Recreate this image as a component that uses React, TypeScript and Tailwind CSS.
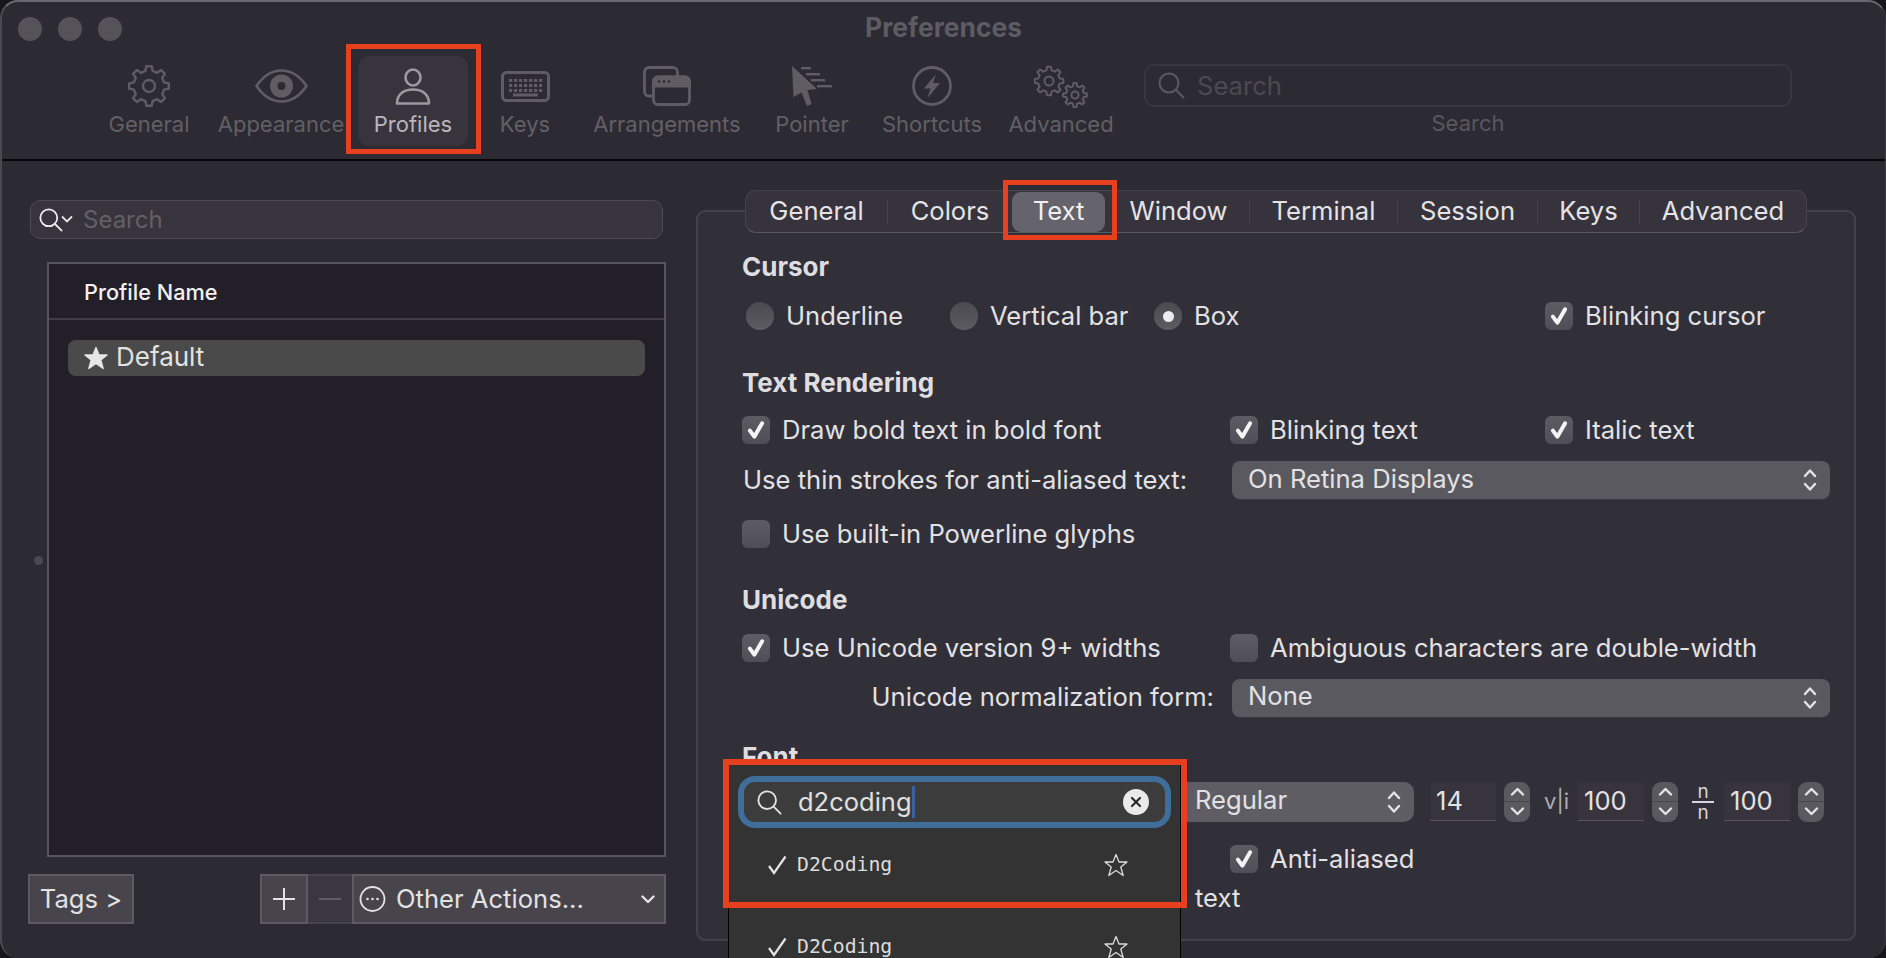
import React from "react";

const gear = (cx: number, cy: number, ro: number, ri: number, n: number) => {
  const pts: string[] = [];
  const step = (Math.PI * 2) / n;
  for (let i = 0; i < n; i++) {
    const a = i * step - Math.PI / 2;
    const p = (r: number, t: number) => `${(cx + r * Math.cos(t)).toFixed(2)} ${(cy + r * Math.sin(t)).toFixed(2)}`;
    pts.push(p(ri, a - step * 0.3), p(ro, a - step * 0.17), p(ro, a + step * 0.17), p(ri, a + step * 0.3));
  }
  return "M" + pts.join("L") + "Z";
};

const Gear = ({ c }: { c: string }) => (
  <svg width="42" height="42" viewBox="0 0 42 42" fill="none" stroke={c} strokeWidth="2.4" strokeLinejoin="round">
    <path d={gear(21, 21, 20, 15.5, 8)} />
    <circle cx="21" cy="21" r="6" />
  </svg>
);
const Eye = ({ c }: { c: string }) => (
  <svg width="53" height="34" viewBox="0 0 53 34" fill="none">
    <path d="M1.5 17C11 3 20 1.5 26.500 1.500S42 3 51.500 17C42 31 33 32.500 26.500 32.500S11 31 1.500 17Z" stroke={c} strokeWidth="2.6" />
    <circle cx="26.500" cy="17" r="11.500" fill={c} />
    <circle cx="26.500" cy="17" r="4" fill="#2c2a32" />
  </svg>
);
const Person = ({ c }: { c: string }) => (
  <svg width="36" height="37" viewBox="0 0 36 37" fill="none" stroke={c} strokeWidth="2.6">
    <ellipse cx="18" cy="9.500" rx="7.500" ry="8" />
    <path d="M2 35.500C2 26 9 21.500 18 21.500S34 26 34 35.500Z" strokeLinejoin="round" />
  </svg>
);
const Keyboard = ({ c }: { c: string }) => (
  <svg width="49" height="31" viewBox="0 0 49 31" fill="none">
    <rect x="1.500" y="1.500" width="46" height="28" rx="4" stroke={c} strokeWidth="3" />
    {[8, 13, 18].map((y) =>
      [8, 13, 18, 23, 28, 33, 38].map((x) => <rect key={`${x}-${y}`} x={x} y={y} width="3.200" height="3" fill={c} />)
    )}
    <rect x="12" y="22.500" width="25" height="3" fill={c} />
  </svg>
);
const Arrange = ({ c }: { c: string }) => (
  <svg width="48" height="40" viewBox="0 0 48 40" fill="none" stroke={c} strokeWidth="2.8">
    <path d="M9 30H6a4.500 4.500 0 0 1-4.500-4.500V6A4.500 4.500 0 0 1 6 1.500h24A4.500 4.500 0 0 1 34.500 6v4" />
    <rect x="10.500" y="11" width="36" height="27.500" rx="4.500" />
    <path d="M10.500 15.500a4.500 4.500 0 0 1 4.500-4.500h27a4.500 4.500 0 0 1 4.500 4.500V20h-36Z" fill={c} />
    <g fill="#2c2a32" stroke="none">
      <circle cx="16" cy="15.500" r="1.300" /><circle cx="21" cy="15.500" r="1.300" /><circle cx="26" cy="15.500" r="1.300" />
    </g>
  </svg>
);
const Pointer = ({ c }: { c: string }) => (
  <svg width="40" height="40" viewBox="0 0 40 40" fill={c}>
    <path d="M0 0L25 23L15.500 24L19.500 38L15 40L9.500 26.500L1.500 31Z" />
    <rect x="9" y="1" width="10" height="2.400" />
    <rect x="14" y="7" width="14" height="2.400" />
    <rect x="19" y="13" width="14" height="2.400" />
    <rect x="25" y="19" width="15" height="2.400" />
  </svg>
);
const Bolt = ({ c }: { c: string }) => (
  <svg width="40" height="40" viewBox="0 0 40 40" fill="none">
    <circle cx="20" cy="20" r="18.500" stroke={c} strokeWidth="2.800" />
    <path d="M24 8L12 22.500H18.500L15.500 32L28 17H21Z" fill={c} />
  </svg>
);
const Gears = ({ c }: { c: string }) => (
  <svg width="54" height="43" viewBox="0 0 54 43" fill="none" stroke={c} strokeWidth="2" strokeLinejoin="round">
    <path d={gear(15, 16, 14.500, 11, 8)} />
    <circle cx="15" cy="16" r="4.500" />
    <path d={gear(41, 30, 12, 9, 8)} />
    <circle cx="41" cy="30" r="3.600" />
  </svg>
);
const SearchIcon = ({ c, s = 27 }: { c: string; s?: number }) => (
  <svg width={s} height={s} viewBox="0 0 27 27" fill="none" stroke={c} strokeWidth="2" strokeLinecap="round">
    <circle cx="11" cy="11" r="9.500" />
    <path d="M18 18L25.500 25.500" />
  </svg>
);
const Updown = () => (
  <svg width="14" height="24" viewBox="0 0 14 24" fill="none" stroke="#e4e3e6" strokeWidth="2.400" strokeLinecap="round" strokeLinejoin="round">
    <path d="M2 8L7 2.500L12 8" /><path d="M2 16L7 21.500L12 16" />
  </svg>
);
const Star = ({ c, fill }: { c: string; fill?: boolean }) => (
  <svg width="24" height="24" viewBox="0 0 24 24" fill={fill ? c : "none"} stroke={c} strokeWidth="1.300" strokeLinejoin="round">
    <path d="M12 1.500L15 9H23L16.800 14L19.200 22.500L12 17.500L4.800 22.500L7.200 14L1 9H9Z" />
  </svg>
);
const Tick = () => (
  <svg width="20" height="20" viewBox="0 0 18 18" fill="none" stroke="#f4f4f5" strokeWidth="3.600" strokeLinecap="round" strokeLinejoin="round">
    <path d="M3.500 9.500L7.500 15L14.500 3" />
  </svg>
);

const Tool = ({ label, w, children, cls = "", active = false }: { label: string; w: string; children: React.ReactNode; cls?: string; active?: boolean }) => (
  <div className={`flex h-[90px] shrink-0 flex-col items-center ${w} ${cls} ${active ? "rounded-[11px] bg-[#38343e]" : ""}`}>
    <div className="flex h-[60px] shrink-0 items-center justify-center">{children}</div>
    <div className={`-mt-[6px] h-[28px] whitespace-nowrap text-[22px] leading-[28px] ${active ? "text-[#b9b7bc]" : "text-[#626066]"}`}>{label}</div>
  </div>
);

const Check = ({ on = true }: { on?: boolean }) => (
  <span className="flex h-[28px] w-[28px] shrink-0 items-center justify-center rounded-[6px] bg-gradient-to-b from-[#5e5c63] to-[#504e56]">
    {on && <Tick />}
  </span>
);
const CheckRow = ({ label, on = true }: { label: string; on?: boolean }) => (
  <div className="flex h-[30px] items-center gap-[12px] whitespace-nowrap">
    <Check on={on} />
    <span>{label}</span>
  </div>
);
const Radio = ({ label, w, on = false }: { label: string; w: string; on?: boolean }) => (
  <div className={`flex h-[30px] items-center gap-[12px] ${w}`}>
    <span className="flex h-[28px] w-[28px] shrink-0 items-center justify-center rounded-full bg-gradient-to-b from-[#4c4a51] to-[#5e5c63]">
      {on && <span className="h-[11px] w-[11px] rounded-full bg-[#ecebee]" />}
    </span>
    <span className="whitespace-nowrap">{label}</span>
  </div>
);
const Heading = ({ children, cls }: { children: React.ReactNode; cls: string }) => (
  <div className={`h-[30px] text-[26px] font-bold leading-[30px] text-[#dedde0] ${cls}`}>{children}</div>
);
const Select = ({ label }: { label: string }) => (
  <div className="flex h-[38px] items-center justify-between rounded-[8px] bg-[#5b5960] pl-[16px] pr-[13px] shadow-[0_1px_0_#3a3840]">
    <span className="-mt-[2px] whitespace-nowrap">{label}</span>
    <Updown />
  </div>
);
const Stepper = () => (
  <div className="ml-[8px] flex h-[40px] w-[26px] shrink-0 flex-col rounded-[9px] bg-[#5b5960]">
    <div className="flex h-[20px] items-center justify-center border-b border-[#48464d]">
      <svg width="15" height="9" viewBox="0 0 15 9" fill="none" stroke="#e4e3e6" strokeWidth="2.400" strokeLinecap="round" strokeLinejoin="round"><path d="M2 7.500L7.500 2L13 7.500" /></svg>
    </div>
    <div className="flex h-[20px] items-center justify-center">
      <svg width="15" height="9" viewBox="0 0 15 9" fill="none" stroke="#e4e3e6" strokeWidth="2.400" strokeLinecap="round" strokeLinejoin="round"><path d="M2 1.500L7.500 7L13 1.500" /></svg>
    </div>
  </div>
);
const Num = ({ v, cls = "" }: { v: string; cls?: string }) => (
  <div className={`flex h-[38px] w-[66px] shrink-0 items-center border-b border-[#56545b] bg-[#38343e] pl-[6px] ${cls}`}>{v}</div>
);

const tabs: [string, string, boolean][] = [
  ["General", "w-[141px]", false],
  ["Colors", "w-[124px]", true],
  ["Text", "w-[93px]", false],
  ["Window", "w-[144px] pl-[3px]", false],
  ["Terminal", "w-[147px]", true],
  ["Session", "w-[139px]", true],
  ["Keys", "w-[101px]", true],
  ["Advanced", "w-[166px]", true],
];

const DropItem = ({ cls }: { cls: string }) => (
  <div className={`flex h-[30px] items-center pl-[39px] pr-[52px] ${cls}`}>
    <svg width="19" height="20" viewBox="0 0 19 20" fill="none" stroke="#e4e4e4" strokeWidth="2.200"><path d="M1 11L6 18L17.500 1.500" /></svg>
    <span className="ml-[10px] flex-1 font-[family-name:'DejaVu_Sans_Mono',monospace] text-[19.800px] text-[#dcdcdc]">D2Coding</span>
    <Star c="#dcdcdc" />
  </div>
);

export default function App() {
  const g = "#5f5d63";
  return (
    <div className="h-[958px] w-[1886px] overflow-hidden bg-[#17161a] font-[family-name:Inter,sans-serif] text-[25.600px] text-[#e2e1e4]">
      <div className="relative flex h-[958px] w-[1886px] flex-col overflow-hidden rounded-[18px] border-l-2 border-r border-t-2 border-l-[#4b4a4f] border-r-[#3a393e] border-t-[#6b696e] bg-[#2c2a32]">
        {/* toolbar */}
        <div className="h-[159px] shrink-0 border-b-2 border-b-[#060507]">
          <div className="grid h-[54px] grid-cols-[1fr_auto_1fr] items-center">
            <div className="flex gap-[16px] pl-[16px]">
              <span className="h-[24px] w-[24px] rounded-full bg-[#56525a]" />
              <span className="h-[24px] w-[24px] rounded-full bg-[#56525a]" />
              <span className="h-[24px] w-[24px] rounded-full bg-[#56525a]" />
            </div>
            <div className="-mt-[4px] text-[26.400px] font-bold leading-none text-[#5d5b63]">Preferences</div>
            <div />
          </div>
          <div className="flex items-start pl-[88px]">
            <Tool label="General" w="w-[118px]"><Gear c={g} /></Tool>
            <Tool label="Appearance" w="w-[124px]" cls="ml-[11px]"><Eye c={g} /></Tool>
            <Tool label="Profiles" w="w-[110px]" cls="ml-[15px]" active><Person c="#9c9a9f" /></Tool>
            <Tool label="Keys" w="w-[100px]" cls="ml-[7px]"><Keyboard c={g} /></Tool>
            <Tool label="Arrangements" w="w-[154px]" cls="ml-[15px]"><Arrange c={g} /></Tool>
            <Tool label="Pointer" w="w-[100px]" cls="ml-[18px]"><Pointer c={g} /></Tool>
            <Tool label="Shortcuts" w="w-[104px]" cls="ml-[18px]"><Bolt c={g} /></Tool>
            <Tool label="Advanced" w="w-[106px]" cls="ml-[24px]"><Gears c={g} /></Tool>
            <div className="ml-[30px] flex w-[648px] shrink-0 flex-col items-center">
              <div className="mt-[8px] flex h-[43px] w-full items-center gap-[12px] rounded-[10px] border-2 border-[#38363e] pl-[12px] text-[#4c4a51]">
                <SearchIcon c="#5c5a60" />
                <span className="mt-[2px]">Search</span>
              </div>
              <div className="mt-[2px] h-[28px] text-[22px] leading-[28px] text-[#5a585e]">Search</div>
            </div>
          </div>
        </div>

        {/* body */}
        <div className="flex min-h-0 flex-1">
          <div className="relative ml-[28px] flex w-[636px] shrink-0 flex-col pt-[39px]">
            <div className="mr-[3px] flex h-[39px] items-center rounded-[10px] border border-[#4c4a52] bg-[#38343e] pl-[8px] text-[24px]">
              <SearchIcon c="#ecebee" s={24} />
              <svg className="ml-[-2px] mt-[-2px]" width="12" height="8" viewBox="0 0 12 8" fill="none" stroke="#e6e5e8" strokeWidth="1.800"><path d="M1 1.500L6 6.500L11 1.500" /></svg>
              <span className="ml-[10px] text-[#626066]">Search</span>
            </div>
            <div className="ml-[17px] mt-[23px] flex h-[595px] flex-col border-2 border-[#57555b] bg-[#221f28]">
              <div className="flex h-[56px] shrink-0 items-center border-b-2 border-[#3f3d45] pl-[35px] pt-[2px] text-[21.700px] font-medium text-[#f0eff2]">Profile Name</div>
              <div className="mx-[19px] mt-[20px] flex h-[36px] items-center rounded-[8px] bg-[#4a4a4a] pl-[16px] text-[26px] text-[#e2e2e2]">
                <Star c="#e6e6e6" fill />
                <span className="-mt-[3px] ml-[8px]">Default</span>
              </div>
            </div>
            <div className="mt-[17px] flex h-[50px] text-[#e2e1e4]">
              <div className="-ml-[2px] flex w-[106px] items-center justify-center border-2 border-[#5d5a62] bg-[#47444c]">Tags &gt;</div>
              <div className="ml-[126px] flex w-[48px] items-center justify-center border-2 border-[#5d5a62] bg-[#47444c]">
                <svg width="22" height="22" viewBox="0 0 22 22" stroke="#e2e1e4" strokeWidth="2"><path d="M11 0V22M0 11H22" /></svg>
              </div>
              <div className="flex w-[44px] items-center justify-center border-y-2 border-[#47454c] bg-[#3a3740]">
                <svg width="22" height="4" viewBox="0 0 22 4" stroke="#5f5d63" strokeWidth="2"><path d="M0 2H22" /></svg>
              </div>
              <div className="flex flex-1 items-center border-2 border-[#5d5a62] bg-[#47444c] pl-[5px] pr-[9px]">
                <svg width="27" height="26" viewBox="0 0 27 26" fill="none" stroke="#e2e1e4" strokeWidth="1.800">
                  <circle cx="13.500" cy="13" r="12" />
                  <g fill="#e2e1e4" stroke="none"><circle cx="8.500" cy="13" r="1.300" /><circle cx="13.500" cy="13" r="1.300" /><circle cx="18.500" cy="13" r="1.300" /></g>
                </svg>
                <span className="ml-[10px] flex-1 whitespace-nowrap">Other Actions...</span>
                <svg width="14" height="9" viewBox="0 0 14 9" fill="none" stroke="#e2e1e4" strokeWidth="2.400" strokeLinecap="round" strokeLinejoin="round"><path d="M1.500 1.500L7 7L12.500 1.500" /></svg>
              </div>
            </div>
            <span className="absolute left-[4px] top-[395px] h-[9px] w-[9px] rounded-full bg-[#4c4a51]" />
          </div>

          <div className="ml-[30px] flex w-[1160px] shrink-0 flex-col pt-[29px]">
            <div className="relative z-10 ml-[49px] flex h-[43px] w-[1062px] items-center rounded-[11px] border border-[#45434b] border-b-[#5a585f] bg-[#37333d] text-[#e4e3e6]">
              {tabs.map(([t, w, sep]) => (
                <React.Fragment key={t}>
                  {sep && <span className="h-[24px] w-px shrink-0 bg-[#45434b]" />}
                  <div className={`flex h-[40px] shrink-0 items-center justify-center ${w} ${t === "Text" ? "rounded-[9px] bg-[#65636b] text-[#f0eff2]" : ""}`}>{t}</div>
                </React.Fragment>
              ))}
            </div>
            <div className="-mt-[23px] h-[731px] shrink-0 rounded-[9px] border-2 border-[#44424a] bg-[#312f38] pl-[44px] pt-[40px]">
              <Heading cls="">Cursor</Heading>
              <div className="mt-[19px] flex pl-[4px]">
                <Radio label="Underline" w="w-[204px]" />
                <Radio label="Vertical bar" w="w-[204px]" />
                <Radio label="Box" w="w-[391px]" on />
                <CheckRow label="Blinking cursor" />
              </div>
              <Heading cls="mt-[37px]">Text Rendering</Heading>
              <div className="mt-[17px] grid grid-cols-[488px_315px_1fr]">
                <CheckRow label="Draw bold text in bold font" />
                <CheckRow label="Blinking text" />
                <CheckRow label="Italic text" />
              </div>
              <div className="mt-[16px] grid grid-cols-[490px_598px] items-center">
                <span className="pl-[1px]">Use thin strokes for anti-aliased text:</span>
                <Select label="On Retina Displays" />
              </div>
              <div className="mt-[20px]"><CheckRow label="Use built-in Powerline glyphs" on={false} /></div>
              <Heading cls="mt-[36px]">Unicode</Heading>
              <div className="mt-[18px] grid grid-cols-[488px_1fr]">
                <CheckRow label="Use Unicode version 9+ widths" />
                <CheckRow label="Ambiguous characters are double-width" on={false} />
              </div>
              <div className="mt-[15px] grid grid-cols-[490px_598px] items-center">
                <span className="pr-[18px] text-right">Unicode normalization form:</span>
                <Select label="None" />
              </div>
              <Heading cls="mt-[25px]">Font</Heading>
              <div className="mt-[10px] flex h-[40px] items-center pl-[439px]">
                <div className="flex h-[40px] w-[233px] shrink-0 items-center justify-between rounded-r-[10px] bg-[#5f5d64] pl-[14px] pr-[13px]">
                  <span className="-mt-[4px]">Regular</span>
                  <Updown />
                </div>
                <Num v="14" cls="ml-[16px]" />
                <Stepper />
                <span className="ml-[14px] w-[24px] shrink-0 whitespace-nowrap text-[22px] text-[#aeadb1]">v|i</span>
                <Num v="100" cls="ml-[10px]" />
                <Stepper />
                <span className="ml-[14px] flex w-[22px] shrink-0 flex-col items-center text-[19px] leading-[17px] text-[#d6d5d9]">
                  <span>n</span>
                  <span className="my-[1px] h-[2px] w-[22px] bg-[#d6d5d9]" />
                  <span>n</span>
                </span>
                <Num v="100" cls="ml-[10px]" />
                <Stepper />
              </div>
              <div className="ml-[488px] mt-[22px]"><CheckRow label="Anti-aliased" /></div>
              <div className="ml-[453px] mt-[9px] h-[30px] leading-[30px]">text</div>
            </div>
          </div>
        </div>

        {/* font picker popover */}
        <div className="absolute left-[726px] top-[763px] z-20 h-[200px] w-[453px] border-x border-black bg-[#333333]">
          <div className="mx-[9px] mt-[11px] flex h-[52px] items-center rounded-[17px] border-[6px] border-[#3f6e9a] bg-[#3c3c3c] pl-[13px] pr-[16px]">
            <SearchIcon c="#e2e2e2" s={25} />
            <span className="ml-[16px] border-r-[3px] border-[#3d5fa0] text-[25.500px] leading-[32px] text-[#e0e0e0]">d2coding</span>
            <span className="ml-auto flex h-[26px] w-[26px] items-center justify-center rounded-full bg-[#eaeaea]">
              <svg width="12" height="12" viewBox="0 0 12 12" stroke="#2a2a2a" strokeWidth="2.200" strokeLinecap="round"><path d="M2 2L10 10M10 2L2 10" /></svg>
            </span>
          </div>
          <DropItem cls="mt-[22px]" />
          <DropItem cls="mt-[52px]" />
        </div>

        {/* red annotations */}
        <div className="pointer-events-none absolute left-[344px] top-[42px] z-30 h-[110px] w-[135px] border-[5px] border-[#e8401f]" />
        <div className="pointer-events-none absolute left-[1001px] top-[178px] z-30 h-[60px] w-[114px] border-[5px] border-[#e8401f]" />
        <div className="pointer-events-none absolute left-[721px] top-[757px] z-30 h-[149px] w-[464px] border-[6px] border-[#e8401f]" />
      </div>
    </div>
  );
}
